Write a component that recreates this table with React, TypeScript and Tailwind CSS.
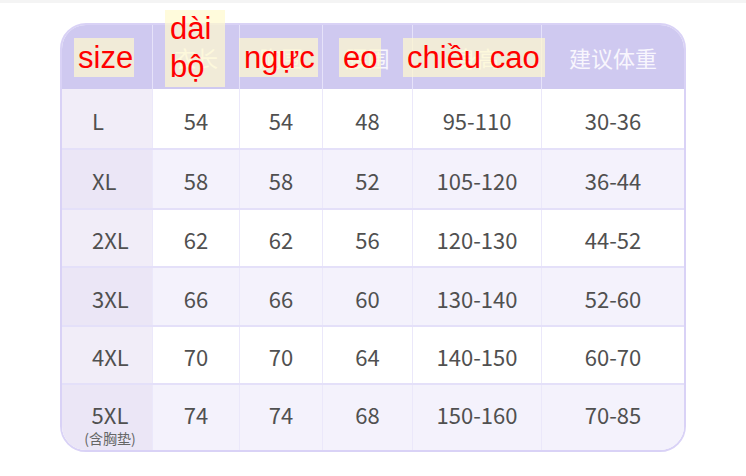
const cols = "grid grid-cols-[90px_87px_83px_90px_129px_143px]";

const rows = [
  { size: "L", vals: ["54", "54", "48", "95-110", "30-36"], h: "h-[59px]", alt: false },
  { size: "XL", vals: ["58", "58", "52", "105-120", "36-44"], h: "h-[58px]", alt: true },
  { size: "2XL", vals: ["62", "62", "56", "120-130", "44-52"], h: "h-[56px]", alt: false },
  { size: "3XL", vals: ["66", "66", "60", "130-140", "52-60"], h: "h-[57px]", alt: true },
  { size: "4XL", vals: ["70", "70", "64", "140-150", "60-70"], h: "h-[56px]", alt: false },
];

const last = { size: "5XL", vals: ["74", "74", "68", "150-160", "70-85"] };

const headers = ["", "衣长", "胸围", "腰围", "身高", "建议体重"];

function Label({ className, children }: { className: string; children: React.ReactNode }) {
  return (
    <div
      className={`absolute bg-[rgba(255,250,205,0.7)] text-[31px] text-[#ff0000] font-['Liberation_Sans',Arial,sans-serif] ${className}`}
    >
      {children}
    </div>
  );
}

export default function App() {
  return (
    <div className="relative w-[746px] h-[476px] bg-white overflow-hidden font-['Noto_Sans_CJK_SC','Noto_Sans',sans-serif]">
      <div className="h-[3px] bg-[#f4f4f4]" />

      <div className="ml-[60px] mt-[20px] w-[626px] rounded-[26px] border-2 border-[#d9d2f6] overflow-hidden text-[22px] text-[#505050]">
        {/* header */}
        <div className={`${cols} h-[64px] bg-[#cfc9f0]`}>
          {headers.map((h, i) => (
            <div
              key={i}
              className={`flex items-center justify-center text-[#f8f6fd] ${i > 0 ? "border-l border-[#e6e2f9]" : ""}`}
            >
              {h}
            </div>
          ))}
        </div>

        {rows.map((r) => (
          <div
            key={r.size}
            className={`${cols} ${r.h} box-content border-b-2 border-[#e4e0f9] ${r.alt ? "bg-[#f4f2fc]" : "bg-white"}`}
          >
            <div className={`flex items-center pl-[30px] pt-[3px] ${r.alt ? "bg-[#ebe6f6]" : "bg-[#f1edf8]"}`}>
              {r.size}
            </div>
            {r.vals.map((v, i) => (
              <div key={i} className="flex items-center justify-center pt-[3px] border-l border-[#ebe8fa]">
                {v}
              </div>
            ))}
          </div>
        ))}

        <div className={`${cols} h-[65px] bg-[#f4f2fc]`}>
          <div className="bg-[#ebe6f6]">
            <div className="ml-[13px] w-[70px] flex flex-col items-center pt-[14px]">
              <span className="leading-[30px]">{last.size}</span>
              <span className="mt-[1px] text-[14px] leading-[17px] text-[#666]">(含胸垫)</span>
            </div>
          </div>
          {last.vals.map((v, i) => (
            <div key={i} className="border-l border-[#ebe8fa]">
              <div className="h-[58px] pt-[1px] flex items-center justify-center">{v}</div>
            </div>
          ))}
        </div>
      </div>

      <Label className="left-[74px] top-[38px] w-[60px] h-[39px] leading-[39px] pl-[4px]">size</Label>
      <Label className="left-[165px] top-[10px] w-[60px] h-[77px] leading-[38px] pl-[5px]">
        dài
        <br />
        bộ
      </Label>
      <Label className="left-[239px] top-[38px] w-[79px] h-[39px] leading-[39px] pl-[5px]">ngực</Label>
      <Label className="left-[339px] top-[38px] w-[42px] h-[39px] leading-[39px] pl-[4px]">eo</Label>
      <Label className="left-[403px] top-[38px] w-[142px] h-[39px] leading-[39px] pl-[4px]">chiều cao</Label>
    </div>
  );
}
